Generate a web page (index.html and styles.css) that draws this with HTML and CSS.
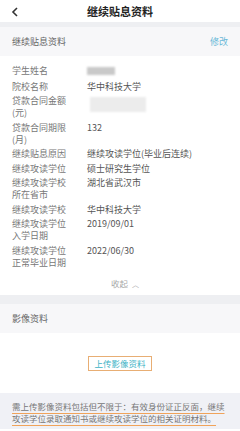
FILE: index.html
```html
<!DOCTYPE html>
<html lang="zh-CN">
<head>
  <meta charset="UTF-8">
  <meta name="viewport" content="width=device-width, initial-scale=1.0">
  <title>继续贴息资料</title>
  <link rel="stylesheet" href="styles.css">
</head>
<body>
  <header class="nav">
    <svg class="back" width="8" height="10" viewBox="0 0 8 10">
      <polyline points="6,1 2,5 6,9" fill="none" stroke="#333" stroke-width="1.6"/>
    </svg>
    <h1>继续贴息资料</h1>
  </header>
  <div class="band"></div>

  <div class="sec-head">
    <span>继续贴息资料</span>
    <a class="edit" href="#">修改</a>
  </div>

  <section class="info">
    <div class="row"><span class="label">学生姓名</span><span class="value"><i class="blur name"></i></span></div>
    <div class="row"><span class="label">院校名称</span><span class="value">华中科技大学</span></div>
    <div class="row"><span class="label">贷款合同金额(元)</span><span class="value"><i class="blur amount"></i></span></div>
    <div class="row"><span class="label">贷款合同期限(月)</span><span class="value">132</span></div>
    <div class="row"><span class="label">继续贴息原因</span><span class="value">继续攻读学位(毕业后连续)</span></div>
    <div class="row"><span class="label">继续攻读学位</span><span class="value">硕士研究生学位</span></div>
    <div class="row"><span class="label">继续攻读学校所在省市</span><span class="value">湖北省武汉市</span></div>
    <div class="row"><span class="label">继续攻读学校</span><span class="value">华中科技大学</span></div>
    <div class="row"><span class="label">继续攻读学位入学日期</span><span class="value">2019/09/01</span></div>
    <div class="row"><span class="label">继续攻读学位正常毕业日期</span><span class="value">2022/06/30</span></div>
    <div class="fold">收起 <span class="arrow">︿</span></div>
  </section>
  <div class="band tall"></div>

  <div class="sec-head">
    <span>影像资料</span>
  </div>
  <div class="upload">
    <button class="upload-btn">上传影像资料</button>
  </div>
  <p class="note"><u>需上传影像资料包括但不限于：有效身份证正反面，继续攻读学位录取通知书或继续攻读学位的相关证明材料。</u></p>
</body>
</html>
```

FILE: styles.css
```css
body {
  margin: 0;
  font-family: "Noto Sans CJK SC", "Noto Sans", sans-serif;
  background: #fff;
  color: #555;
}

.nav {
  height: 22px;
  display: flex;
  align-items: center;
  justify-content: center;
  position: relative;
}

.nav h1 {
  margin: 0;
  font-size: 11px;
  font-weight: bold;
  color: #222;
}

.back {
  position: absolute;
  left: 11px;
  top: 7px;
}

.band {
  height: 5px;
  background: #eeeff2;
}

.band.tall {
  height: 9px;
}

.sec-head {
  height: 29px;
  padding: 0 12px;
  display: flex;
  align-items: center;
  justify-content: space-between;
  background: #f7f7f9;
  font-size: 9px;
  color: #666;
}

.edit {
  color: #6ab8d8;
  text-decoration: none;
}

.info {
  padding: 9px 12px 0;
  font-size: 9px;
}

.row {
  display: grid;
  grid-template-columns: 75px 1fr;
  line-height: 12px;
  margin-bottom: 2.5px;
}

.label {
  width: 58px;
  color: #777;
}

.value {
  color: #555;
}

.blur {
  display: inline-block;
  filter: blur(1px);
}

.blur.name {
  width: 28px;
  height: 8px;
  margin-top: 2px;
  background: #c9c9c9;
}

.blur.amount {
  width: 56px;
  height: 15px;
  margin: 2px 0 0 3px;
  background: #ececec;
}

.fold {
  text-align: center;
  line-height: 12px;
  padding: 6px 0 5px 10px;
  color: #a8a8a8;
  font-size: 8.5px;
}

.arrow {
  font-size: 7px;
  margin-left: 2px;
}

.upload {
  display: flex;
  justify-content: center;
  padding: 23px 0 22px;
}

.upload-btn {
  height: 15px;
  padding: 0 5px;
  border: 1px solid #e8ae74;
  background: #fff;
  color: #3cb3c6;
  font-family: inherit;
  font-size: 8.5px;
  line-height: 13px;
}

.note {
  margin: 0;
  padding: 7px 12px 5px;
  background: #f0f1f6;
  font-size: 8.5px;
  line-height: 12px;
  color: #777;
}

.note u {
  text-decoration: underline;
  text-decoration-color: #f0a35a;
  text-underline-offset: 3px;
}
```
